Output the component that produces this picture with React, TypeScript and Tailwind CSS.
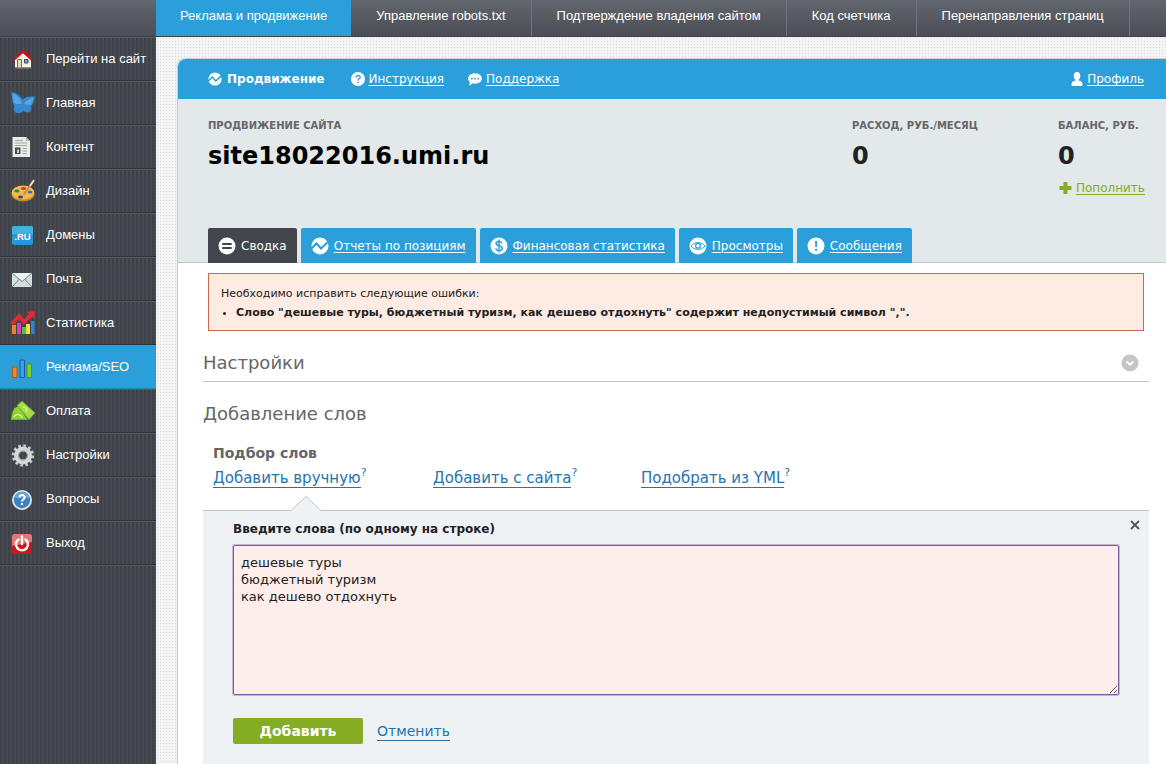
import type { ReactNode } from "react";

const topTabs = [
  "Реклама и продвижение",
  "Управление robots.txt",
  "Подтверждение владения сайтом",
  "Код счетчика",
  "Перенаправления страниц",
];

const HouseIcon = () => (
  <svg viewBox="0 0 24 24" className="size-6">
    <path d="M4 12 12 5l8 7v9H4z" fill="#f4f1ea" />
    <path d="M4 20h16v1.5H4z" fill="#8d8a80" />
    <path d="M16 3h2.500v4H16z" fill="#a3161c" />
    <path d="M0.800 13 12 2.200 22.500 13l-2.500.5L12 6.200 3.500 13.500z" fill="#c4141c" />
    <path d="M6.500 12.500h4V21h-4z" fill="#e8d5ae" stroke="#8a6638" />
    <path d="M13.500 12.500h3.500v3.500h-3.500z" fill="#7fa0dc" stroke="#3e4652" />
  </svg>
);

const ButterflyIcon = () => (
  <svg viewBox="0 0 24 24" className="size-6">
    <path d="M0.500 1C5 1.500 9 4 11.500 8.500 14 6 18 5.500 24 5.500c-.5 4-2 8-4 9.500.8 2.500.5 4.500-1.500 6-2.500 1-4.500.2-6-1-2 2-5 2.800-8 1.500C2.500 20 2 17.500 3.500 15 1 12 1 7 .5 1z" fill="#3589cc" />
    <path d="M1.500 2.500c4 1 8 5 9.500 10-4 1-6.500.8-8-1zM22.500 7c-4 .5-7.500 2-9.500 5.500 2.500 1.200 5 1.500 7 1z" fill="#55a8e4" />
  </svg>
);

const PageIcon = () => (
  <svg viewBox="0 0 24 24" className="size-6">
    <path d="M1.500 2h13.500l4 4v16H1.500z" fill="#e9ebe6" />
    <path d="M15 2v4h4z" fill="#b4b8b2" />
    <path d="M4 5.500h8M4 8h12M4 10.500h12M11.500 13.500H16M11.500 16H16M11.500 18.500H16" stroke="#a3a7a3" />
    <path d="M4 12.500h5.500v6.500H4z" fill="#4a4d4d" />
    <path d="M6 14.500h2V18H6z" fill="#c9ccc8" />
  </svg>
);

const PaletteIcon = () => (
  <svg viewBox="0 0 24 24" className="size-6">
    <ellipse cx="12" cy="15" rx="11.500" ry="7.500" fill="#c98a20" />
    <ellipse cx="12" cy="13.500" rx="11.200" ry="7" fill="#edbb50" />
    <ellipse cx="9.500" cy="18" rx="2.500" ry="1.500" fill="#43464c" />
    <ellipse cx="6" cy="12" rx="2.600" ry="1.600" fill="#2f7f4a" />
    <ellipse cx="12.500" cy="9.500" rx="2.600" ry="1.500" fill="#c8402e" />
    <ellipse cx="19" cy="13" rx="2.300" ry="1.500" fill="#3d6fc0" />
    <path d="M12.500 16 22 2.500" stroke="#c98b4a" strokeWidth="1.800" />
    <path d="m19 7 4-6" stroke="#f5e3b8" strokeWidth="1.800" />
  </svg>
);

const RuIcon = () => (
  <svg viewBox="0 0 24 24" className="size-6">
    <rect x="1" y="3" width="21" height="19" rx="2" fill="#2698d4" />
    <path d="M3 3h17a2 2 0 0 1 2 2v6H1V5a2 2 0 0 1 2-2z" fill="#43b0e2" />
    <text x="11.500" y="16.500" textAnchor="middle" fontSize="9.500" fontWeight="700" fill="#fff" fontFamily="Liberation Sans, sans-serif">.RU</text>
  </svg>
);

const MailIcon = () => (
  <svg viewBox="0 0 24 24" className="size-6">
    <path d="M1 6h20v14H1z" fill="#d3dfdd" />
    <path d="M1 6h20L11 14.500z" fill="#eef4f2" />
    <path d="M1 6l10 8.500L21 6M1 20l7.500-8M21 20l-7.500-8" fill="none" stroke="#6f8586" />
  </svg>
);

const StatsIcon = () => (
  <svg viewBox="0 0 24 24" className="size-6">
    <path d="M1 14h4v9H1z" fill="#e8832f" />
    <path d="M6 12h4v11H6z" fill="#d840b6" />
    <path d="M11 16h4v7h-4z" fill="#4fc04a" />
    <path d="M15 13h4v10h-4z" fill="#f0e044" />
    <path d="M20 10h3.500v13H20z" fill="#2f83d6" />
    <path d="m1 13 7-8 5 6 7-7" fill="none" stroke="#e02a35" strokeWidth="4" />
    <path d="m16 1 8-1-.5 8z" fill="#e02a35" />
  </svg>
);

const BarsIcon = () => (
  <svg viewBox="0 0 24 24" className="size-6">
    <path d="M1.500 12h4.500v10.500H1.500z" fill="#e88a2e" stroke="#a85a1a" />
    <path d="M9 5h4.500v17.500H9z" fill="#3f9fe6" stroke="#155f9f" />
    <path d="M16 9h4.500v13.500H16z" fill="#7fd02c" stroke="#4c9420" />
  </svg>
);

const MoneyIcon = () => (
  <svg viewBox="0 0 24 24" className="size-6">
    <path d="M1 13 4 10l17 8-3 3H0z" fill="#4c9420" />
    <path d="M3 9.500 8 7l8 13.500H0z" fill="#8fd032" />
    <path d="M6 6.500 11 2l13 12-6 6.500z" fill="#a4dc48" stroke="#64ac28" />
    <path d="M11.500 8.500c3-1.500 5.500 1.500 3.500 4M2.500 18c3-4 7-3 9 1" fill="none" stroke="#d4f08c" strokeWidth="1.500" />
  </svg>
);

const GearIcon = () => (
  <svg viewBox="0 0 24 24" className="size-6">
    <circle cx="12" cy="12.500" r="9.700" fill="none" stroke="#c9cccd" strokeWidth="3" strokeDasharray="2.600 2.480" />
    <circle cx="12" cy="12.500" r="6.500" fill="none" stroke="#d4d7d8" strokeWidth="5" />
    <circle cx="12" cy="12.500" r="4.500" fill="none" stroke="#8e9294" />
  </svg>
);

const HelpIcon = () => (
  <svg viewBox="0 0 24 24" className="size-6">
    <circle cx="11" cy="13" r="10" fill="#dce6ee" />
    <circle cx="11" cy="13" r="8.200" fill="#3a83c0" />
    <path d="M3.500 11a7.600 7.600 0 0 1 15 0z" fill="#64a6d8" />
    <path d="M8.500 10.500c0-3.500 5.500-3.200 5.200 0-.2 1.800-2.700 2-2.700 4M11 16v2" fill="none" stroke="#fff" strokeWidth="2" />
  </svg>
);

const PowerIcon = () => (
  <svg viewBox="0 0 24 24" className="size-6">
    <rect x="1" y="3" width="20" height="20" rx="2.500" fill="#c8171d" />
    <path d="M3.500 3h15A2.500 2.500 0 0 1 21 5.500V11L1 15V5.500A2.500 2.500 0 0 1 3.500 3z" fill="#e2777a" />
    <path d="M7.500 8.500a6 6 0 1 0 7 0M11 5.500V13" fill="none" stroke="#fff" strokeWidth="2.400" strokeLinecap="round" />
  </svg>
);

const menu: { label: string; icon: ReactNode; active?: boolean }[] = [
  { label: "Перейти на сайт", icon: <HouseIcon /> },
  { label: "Главная", icon: <ButterflyIcon /> },
  { label: "Контент", icon: <PageIcon /> },
  { label: "Дизайн", icon: <PaletteIcon /> },
  { label: "Домены", icon: <RuIcon /> },
  { label: "Почта", icon: <MailIcon /> },
  { label: "Статистика", icon: <StatsIcon /> },
  { label: "Реклама/SEO", icon: <BarsIcon />, active: true },
  { label: "Оплата", icon: <MoneyIcon /> },
  { label: "Настройки", icon: <GearIcon /> },
  { label: "Вопросы", icon: <HelpIcon /> },
  { label: "Выход", icon: <PowerIcon /> },
];

// the arrow line cuts the white disc in two
const TrendIcon = ({ className }: { className: string }) => (
  <svg viewBox="0 0 18 18" className={className}>
    <circle cx="9" cy="9" r="8.500" fill="#fff" />
    <path d="m-1 13 6.500-6.500 4.500 5L18.500 3.500" fill="none" stroke="#2a9fd9" strokeWidth="2" />
  </svg>
);

const QuestionIcon = () => (
  <svg viewBox="0 0 18 18" className="size-3.5">
    <circle cx="9" cy="9" r="9" fill="#fff" />
    <path d="M6.500 7c0-3.500 5.500-3.200 5.200 0-.2 1.800-2.700 1.800-2.700 4M9 12.500v2" fill="none" stroke="#2a9fd9" strokeWidth="1.800" />
  </svg>
);

const BubbleIcon = () => (
  <svg viewBox="0 0 18 18" className="size-3.5">
    <path d="M9 1.500c5 0 8.800 3 8.800 6.800S14 15 9 15c-1 0-2 0-3-.5-1.500 1.500-3 2.500-5 2.800 1-1.300 1.500-2.500 1.300-4.300C1 11.800.2 10.200.2 8.300.2 4.500 4 1.500 9 1.500z" fill="#fff" />
    <path d="M4 7.500h2v2H4zM8 7.500h2v2H8zM12 7.500h2v2h-2z" fill="#2a9fd9" />
  </svg>
);

const UserIcon = () => (
  <svg viewBox="0 0 12 14" className="h-3.5 w-3">
    <path d="M6 0c2 0 3.300 1.500 3.300 3.700C9.300 5.500 8.500 7 7.600 7.700v.8C10 9 11.500 9.800 11.500 12.500c0 1-.5 1.500-1.500 1.500H2C1 14 .5 13.500.5 12.500.5 9.800 2 9 4.400 8.500v-.8C3.500 7 2.700 5.500 2.700 3.700 2.700 1.500 4 0 6 0z" fill="#fff" />
  </svg>
);

const reportTabs: { label: string; icon: ReactNode; active?: boolean }[] = [
  {
    label: "Сводка",
    active: true,
    icon: (
      <svg viewBox="0 0 18 18" className="size-[18px]">
        <circle cx="9" cy="9" r="8.500" fill="#fff" />
        <path d="M5 7h8M5 11h8" stroke="#43464d" strokeWidth="2" strokeLinecap="round" />
      </svg>
    ),
  },
  { label: "Отчеты по позициям", icon: <TrendIcon className="size-[18px]" /> },
  {
    label: "Финансовая статистика",
    icon: (
      <svg viewBox="0 0 18 18" className="size-[18px]">
        <circle cx="9" cy="9" r="8.500" fill="#fff" />
        <path d="M12 6.200C11.500 5 10.500 4.500 9 4.500c-1.800 0-3 .8-3 2.100C6 9.600 12.200 8 12.200 11.200c0 1.500-1.300 2.300-3.200 2.300-1.700 0-2.800-.6-3.300-2M9 2.500v13" fill="none" stroke="#2a9fd9" strokeWidth="1.500" />
      </svg>
    ),
  },
  {
    label: "Просмотры",
    icon: (
      <svg viewBox="0 0 18 18" className="size-[18px]">
        <circle cx="9" cy="9" r="8.500" fill="#fff" />
        <path d="M2 9C5.500 4.500 12.500 4.500 16 9 12.500 13.500 5.500 13.500 2 9z" fill="none" stroke="#2a9fd9" />
        <circle cx="9" cy="8.700" r="2.400" fill="#fff" stroke="#2a9fd9" strokeWidth="1.200" />
      </svg>
    ),
  },
  {
    label: "Сообщения",
    icon: (
      <svg viewBox="0 0 18 18" className="size-[18px]">
        <circle cx="9" cy="9" r="8.500" fill="#fff" />
        <path d="M8 4h2.200l-.4 6.200H8.400zM8.100 11.800h2v2h-2z" fill="#2a9fd9" />
      </svg>
    ),
  },
];

const sources = [
  { label: "Добавить вручную", width: "w-[220px]" },
  { label: "Добавить с сайта", width: "w-[208px]" },
  { label: "Подобрать из YML", width: "w-[220px]" },
];

function Sidebar() {
  return (
    <nav className="w-[156px] shrink-0 bg-[#414449] bg-[repeating-linear-gradient(90deg,#3d4148_0px,#3d4148_2px,#474a50_2px,#474a50_4px)]">
      <ul>
        {menu.map(({ label, icon, active }) => (
          <li key={label}>
            <a
              href="#"
              className={
                "flex h-11 items-center gap-[11px] border-t border-b pl-[11px] text-[13px] text-white " +
                (active ? "border-t-[#2a9fd9] border-b-[#2488bb] bg-[#2a9fd9]" : "border-t-[#575b61] border-b-[#303338]")
              }
            >
              {icon}
              {label}
            </a>
          </li>
        ))}
        <li className="border-t border-[#575b61]" />
      </ul>
    </nav>
  );
}

function TopBar() {
  return (
    <header className="flex h-[37px] border-b border-[#3f4248] bg-linear-to-b from-[#62666d] to-[#4b4e54] pl-[156px] text-[13px]">
      {topTabs.map((label, i) => (
        <a
          key={label}
          href="#"
          className={
            "flex h-9 items-center pb-1 whitespace-nowrap text-white " +
            (i === 0 ? "bg-[#2a9fd9] px-6" : "border-r border-[#71757b] px-[25px]")
          }
        >
          {label}
        </a>
      ))}
    </header>
  );
}

function PanelHeader() {
  return (
    <div className="flex h-10 items-center rounded-tl-lg bg-[#2a9fd9] pr-[22px] pl-[30px] text-[12px] text-white">
      <span className="mr-[26px] flex items-center gap-[5px] font-bold">
        <TrendIcon className="size-3.5" />
        Продвижение
      </span>
      <a href="#" className="mr-6 flex items-center gap-1 underline underline-offset-2">
        <QuestionIcon />
        Инструкция
      </a>
      <a href="#" className="flex items-center gap-1 underline underline-offset-2">
        <BubbleIcon />
        Поддержка
      </a>
      <a href="#" className="ml-auto flex items-center gap-1 underline underline-offset-2">
        <UserIcon />
        Профиль
      </a>
    </div>
  );
}

function Summary() {
  return (
    <div className="border-b border-[#c3c7cb] bg-[#e3e8ea] pt-5 pl-[30px]">
      <div className="flex h-[109px] pr-[22px]">
        <div className="flex-1">
          <p className="text-[10px] leading-[14px] font-bold text-[#666] uppercase">Продвижение сайта</p>
          <p className="mt-2 text-[24px] leading-[30px] font-bold text-black">site18022016.umi.ru</p>
        </div>
        <div className="w-[206px]">
          <p className="text-[10px] leading-[14px] font-bold text-[#666] uppercase">Расход, руб./месяц</p>
          <p className="mt-2 text-[24px] leading-[30px] font-bold text-[#222]">0</p>
        </div>
        <div className="w-[86px]">
          <p className="text-[10px] leading-[14px] font-bold whitespace-nowrap text-[#666] uppercase">Баланс, руб.</p>
          <p className="mt-2 text-[24px] leading-[30px] font-bold text-[#222]">0</p>
          <a href="#" className="mt-2 flex items-center gap-1 text-[12px] text-[#84ad24]">
            <svg viewBox="0 0 14 14" className="size-3.5 shrink-0">
              <path d="M5.500 1h4v4h4v4h-4v4h-4V9h-4V5h4z" fill="#84ad24" />
            </svg>
            <span className="underline underline-offset-2">Пополнить</span>
          </a>
        </div>
      </div>
      <div className="-mb-px flex gap-1 text-[12px]">
        {reportTabs.map(({ label, icon, active }) => (
          <a
            key={label}
            href="#"
            className={
              "flex h-[35px] items-center gap-[5px] rounded-t-xs px-2.5 whitespace-nowrap text-white " +
              (active ? "bg-[#43464d]" : "bg-[#2a9fd9] underline underline-offset-2")
            }
          >
            {icon}
            {label}
          </a>
        ))}
      </div>
    </div>
  );
}

function AddWords() {
  return (
    <section className="flex flex-1 flex-col">
      <h2 className="mt-5 text-[18px] leading-6 text-[#666]">Добавление слов</h2>
      <h3 className="mt-[17px] pl-2.5 text-[14px] leading-5 font-bold text-[#666]">Подбор слов</h3>
      <div className="mt-1.5 flex pl-2.5 text-[15px] leading-5 text-[#2673ad]">
        {sources.map(({ label, width }) => (
          <div key={label} className={"flex items-start whitespace-nowrap " + width}>
            <a href="#" className="border-b border-[#2673ad] leading-[18px]">{label}</a>
            <a href="#" className="text-[11px] leading-2">?</a>
          </div>
        ))}
      </div>
      <form
        className="relative mt-[22px] flex-1 border-t border-[#c4c4c4] bg-[#eff2f4] px-[30px] pt-2 pb-5"
        onSubmit={(e) => e.preventDefault()}
      >
        <svg viewBox="0 0 30 16" className="absolute -top-[15px] left-[88px] h-4 w-[30px]">
          <path d="M0 14.500 15 0l15 14.500V16H0z" fill="#eff2f4" />
          <path d="M0 14.500 15 .5l15 14" fill="none" stroke="#c4c4c4" />
        </svg>
        <button type="button" aria-label="Закрыть" className="absolute top-[9px] right-[9px]">
          <svg viewBox="0 0 10 10" className="size-2.5">
            <path d="m1 1 8 8M9 1 1 9" stroke="#555" strokeWidth="1.800" />
          </svg>
        </button>
        <label htmlFor="words" className="block text-[12px] leading-5 font-bold text-[#222]">
          Введите слова (по одному на строке)
        </label>
        <textarea
          id="words"
          defaultValue={"дешевые туры\nбюджетный туризм\nкак дешево отдохнуть"}
          className="mt-1.5 block h-[150px] w-full resize rounded-xs border border-[#7d5fa0] bg-[#fdeeec] px-[7px] py-2 text-[13px] leading-[17px] text-[#222] ring-1 ring-[#7d5fa0]/40 outline-none"
        />
        <div className="mt-[23px] flex items-center gap-3.5">
          <button type="submit" className="h-[26px] w-[130px] rounded-xs bg-[#84ad24] text-[14px] font-bold text-white">
            Добавить
          </button>
          <a href="#" className="border-b border-[#2673ad] text-[14px] leading-[18px] text-[#2673ad]">Отменить</a>
        </div>
      </form>
    </section>
  );
}

export default function App() {
  return (
    <div className="flex min-h-screen flex-col font-['Liberation_Sans',Arial,sans-serif]">
      <TopBar />
      <div className="flex flex-1">
        <Sidebar />
        <main className="flex min-w-0 flex-1 flex-col bg-[#f4f4f5] bg-[radial-gradient(#dcdcdf_1px,transparent_1px)] bg-size-[3px_3px] pt-[21px] pl-[21px]">
          <div className="flex flex-1 flex-col rounded-tl-lg border-t border-l border-[#c9cccf] bg-white font-['DejaVu_Sans',Verdana,sans-serif]">
            <PanelHeader />
            <Summary />
            <div className="flex flex-1 flex-col pr-[17px] pl-[25px]">
              <div className="mt-2.5 mr-[5px] ml-[5px] border border-[#c9694f] bg-[#fdebe4] px-3 pt-2.5 pb-2 text-[11px] leading-[19px] text-[#222]">
                <p>Необходимо исправить следующие ошибки:</p>
                <ul className="list-disc pl-[15px]">
                  <li className="font-bold">
                    Слово "дешевые туры, бюджетный туризм, как дешево отдохнуть" содержит недопустимый символ ",".
                  </li>
                </ul>
              </div>
              <div className="mt-5 flex items-center justify-between border-b border-[#c4c4c4] pr-2.5 pb-1.5">
                <h2 className="text-[18px] leading-6 text-[#666]">Настройки</h2>
                <button type="button" aria-label="Развернуть настройки">
                  <svg viewBox="0 0 18 18" className="size-[18px]">
                    <circle cx="9" cy="9" r="8.500" fill="#c5c5c5" />
                    <path d="m5.500 7.500 3.500 3 3.500-3" fill="none" stroke="#fff" strokeWidth="2.200" />
                  </svg>
                </button>
              </div>
              <AddWords />
            </div>
          </div>
        </main>
      </div>
    </div>
  );
}
